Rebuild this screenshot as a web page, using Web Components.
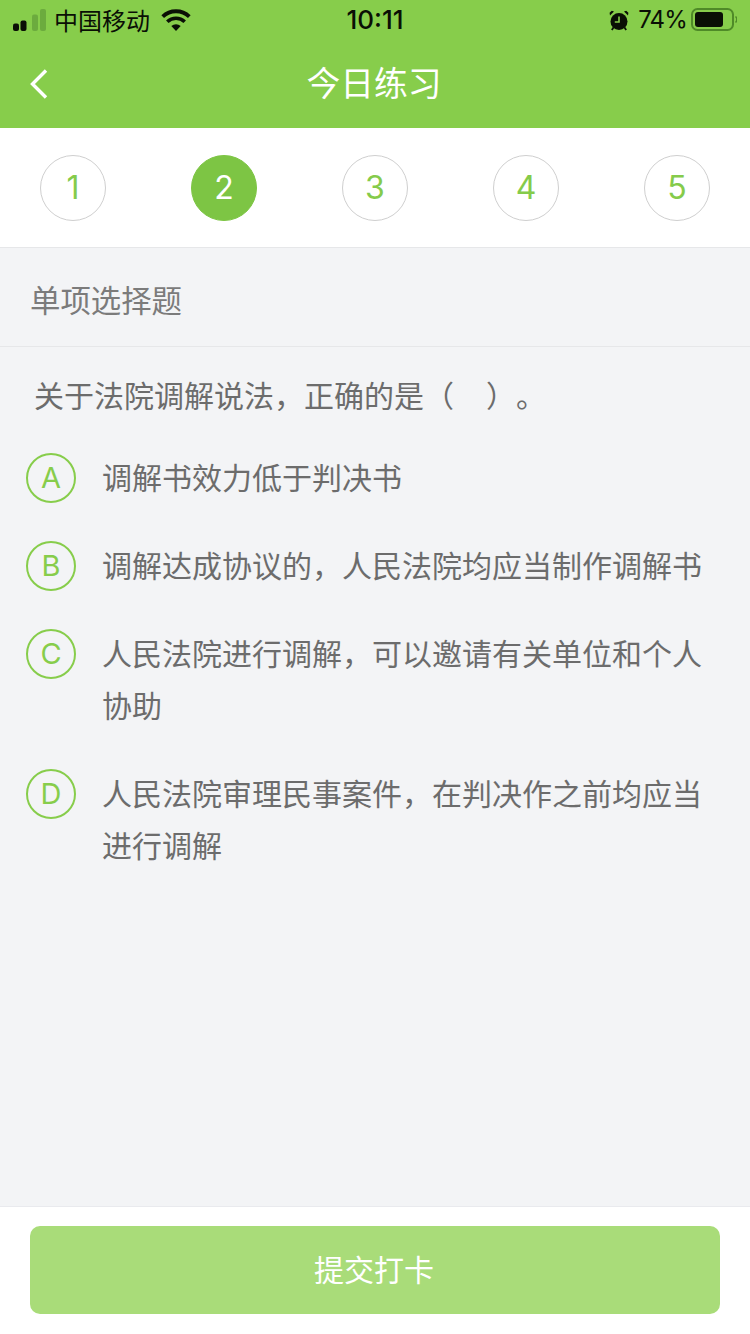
<!DOCTYPE html>
<html lang="zh">
<head>
<meta charset="utf-8">
<style>
html,body{margin:0;padding:0;width:750px;height:1334px;overflow:hidden}
body{font-family:"Noto Sans CJK SC","Noto Sans",sans-serif}
</style>
</head>
<body>
<quiz-app></quiz-app>
<script>
const FONT='"Noto Sans CJK SC","Noto Sans",sans-serif';
const LATIN='Inter,Roboto,"Noto Sans CJK SC",sans-serif';
function def(name,css,html){
  customElements.define(name,class extends HTMLElement{
    constructor(){super();const r=this.attachShadow({mode:'open'});r.innerHTML='<style>'+css+'</style>'+(typeof html==='function'?html(this):html);}
  });
}
def('status-bar',`
:host{display:grid;grid-template-columns:1fr auto 1fr;align-items:center;height:40px;padding:0 13px;color:#0a0f05;font:24px/40px ${FONT}}
.l,.r{display:flex;align-items:center}
.r{justify-content:flex-end}
svg{display:block}
.carrier{margin-left:7px}
.wifi{margin-left:11px}
.time{font:500 26px/40px ${LATIN}}
.pct{margin-left:9px;font:400 24px/40px ${LATIN};letter-spacing:-.8px}
.bat{margin-left:4px}
`,`
<div class="l">
<svg width="34" height="22" viewBox="0 0 34 22"><rect x="0" y="14.500" width="6" height="7.500" rx="2" fill="#0a0f05"/><rect x="7.500" y="11.500" width="6" height="10.500" rx="2" fill="#0a0f05"/><rect x="19" y="5.500" width="6" height="16.500" rx="2" fill="#6cab3e"/><rect x="27" y="0" width="6" height="22" rx="2" fill="#6cab3e"/></svg>
<span class="carrier">中国移动</span>
<svg class="wifi" width="30" height="22" viewBox="0 0 30 22"><path d="M15 22 L10.300 17 A7 7 0 0 1 19.700 17Z" fill="#0a0f05"/><path d="M6.300 12.700A12.500 12.500 0 0 1 23.700 12.700" fill="none" stroke="#0a0f05" stroke-width="3.600"/><path d="M1.700 7.700A19 19 0 0 1 28.300 7.700" fill="none" stroke="#0a0f05" stroke-width="3.800"/></svg>
</div>
<div class="time">10:11</div>
<div class="r">
<svg width="20" height="21" viewBox="0 0 20 21"><circle cx="10" cy="11.500" r="8.500" fill="#0a0f05"/><path d="M10 6.500V12H5.800" fill="none" stroke="#87cd4b" stroke-width="1.600"/><path d="M1 5.500L5 1.500 2.800 .8 .6 2.800ZM19 5.500L15 1.500 17.200 .8 19.400 2.800Z" fill="#0a0f05"/><path d="M4.500 17.500L2.800 20M15.500 17.500L17.200 20" stroke="#0a0f05" stroke-width="1.800"/></svg>
<span class="pct">74%</span>
<svg class="bat" width="46" height="24" viewBox="0 0 46 24"><rect x="1" y="1" width="41" height="21" rx="5.500" fill="none" stroke="#4f8a28" stroke-width="2"/><rect x="4" y="4" width="28" height="15" rx="3" fill="#0a0f05"/><path d="M44.500 8.500a4 4 0 0 1 0 6" fill="none" stroke="#4f8a28" stroke-width="1.500"/></svg>
</div>`);
def('nav-bar',`
:host{display:flex;align-items:center;justify-content:center;position:relative;box-sizing:border-box;height:88px;padding-bottom:4px;color:#fff;font:33.800px/84px ${FONT}}
.t{margin-left:-2px}
svg{position:absolute;left:30px;top:29px}
`,`<svg width="18" height="30" viewBox="0 0 18 30"><path d="M16 1.500 2.500 15 16 28.500" fill="none" stroke="#fff" stroke-width="3.400"/></svg><span class="t"><slot></slot></span>`);
def('step-dot',`
:host{display:flex;align-items:center;justify-content:center;box-sizing:border-box;width:66px;height:66px;border-radius:50%;border:1px solid #cfcfcf;color:#85cb4b;font:400 32px/1 ${LATIN}}
:host([active]){background:#7dc544;border-color:#7dc544;color:#fff}
`,`<slot></slot>`);
def('step-row',`
:host{display:flex;justify-content:space-between;align-items:flex-start;box-sizing:border-box;height:120px;padding:27px 40px 0;background:#fff;border-bottom:1px solid #e6e7e9}
`,`<slot></slot>`);
def('section-head',`
:host{display:block;box-sizing:border-box;height:99px;padding-left:30px;color:#7b7b7b;font:30.400px/103px ${FONT};border-bottom:1px solid #e6e7e9}
`,`<slot></slot>`);
def('quiz-option',`
:host{display:flex;align-items:flex-start;padding-left:26px;padding-right:20px;color:#6c6c6c;font:30px/52px ${FONT}}
.c{flex:none;box-sizing:border-box;width:50px;height:50px;margin-right:27px;border-radius:50%;border:2px solid #87cd4b;color:#87cd4b;font:400 29px/46px ${LATIN};text-align:center}
.t{flex:1;min-width:0;margin:-3px 0 3px -1px}
`,el=>`<div class="c">${el.getAttribute('letter')}</div><div class="t"><slot></slot></div>`);
def('quiz-question',`
:host{display:block;padding:21px 0 33px 34px;color:#6c6c6c;font:30px/52px ${FONT};white-space:pre;text-spacing-trim:space-all;word-spacing:1.300px}
`,`<slot></slot>`);
def('option-list',`
:host{display:flex;flex-direction:column;gap:36px}
`,`<slot></slot>`);
def('submit-bar',`
:host{display:block;box-sizing:border-box;height:128px;padding:19px 30px 0;background:#fff;border-top:1px solid #e9eaee}
.b{display:flex;align-items:center;justify-content:center;box-sizing:border-box;height:88px;padding-bottom:4px;border-radius:10px;background:#a9dc79;color:#fff;font:30px/84px ${FONT}}
.s{margin-left:-2px}
`,`<div class="b"><span class="s"><slot></slot></span></div>`);
def('quiz-app',`
:host{display:flex;flex-direction:column;width:750px;height:1334px;background:#f3f4f6}
.top{background:#87cd4b}
main{flex:1;min-height:0}
`,`
<div class="top"><status-bar></status-bar><nav-bar>今日练习</nav-bar></div>
<step-row><step-dot>1</step-dot><step-dot active>2</step-dot><step-dot>3</step-dot><step-dot>4</step-dot><step-dot>5</step-dot></step-row>
<section-head>单项选择题</section-head>
<main>
<quiz-question>关于法院调解说法，正确的是（    ）。</quiz-question>
<option-list>
<quiz-option letter="A">调解书效力低于判决书</quiz-option>
<quiz-option letter="B">调解达成协议的，人民法院均应当制作调解书</quiz-option>
<quiz-option letter="C">人民法院进行调解，可以邀请有关单位和个人协助</quiz-option>
<quiz-option letter="D">人民法院审理民事案件，在判决作之前均应当进行调解</quiz-option>
</option-list>
</main>
<submit-bar>提交打卡</submit-bar>`);
</script>
</body>
</html>
